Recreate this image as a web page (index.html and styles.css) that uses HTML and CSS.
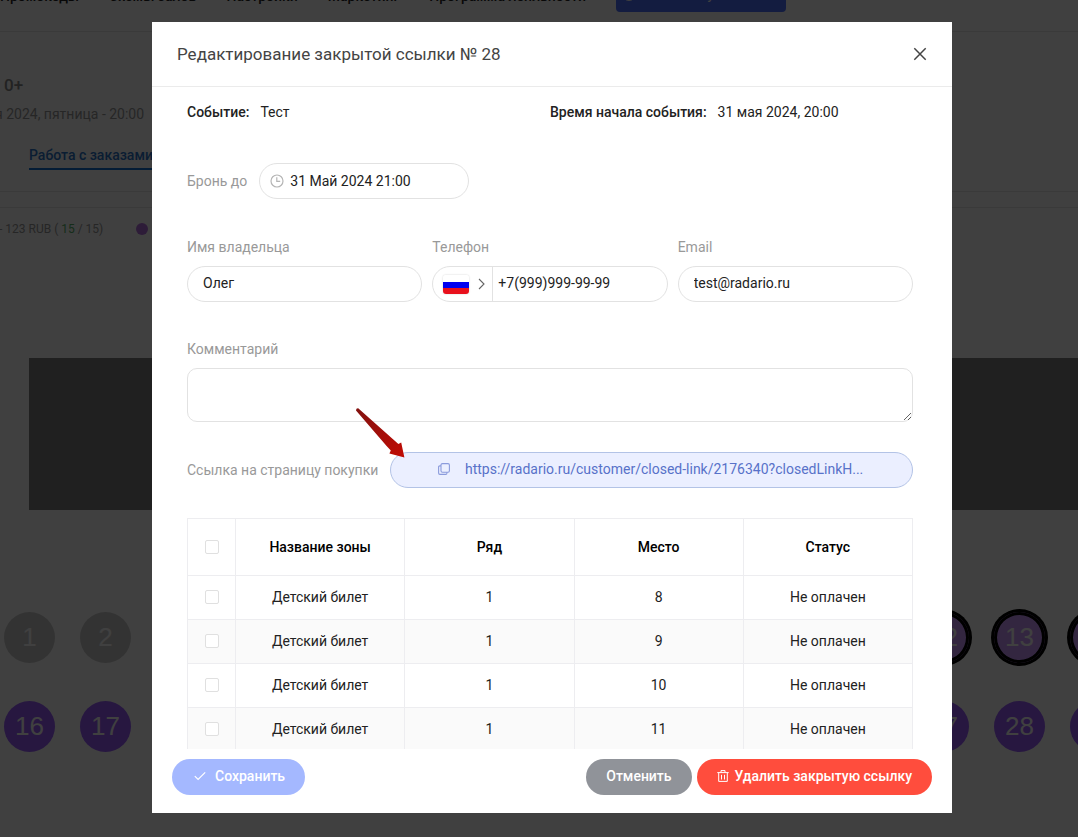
FILE: index.html
```html
<!DOCTYPE html>
<html lang="ru">
<head>
<meta charset="utf-8">
<title>Редактирование закрытой ссылки</title>
<link rel="stylesheet" href="styles.css">
</head>
<body>
<div class="page">
  <header class="topbar">
    <nav class="nav">
      <a href="#">Промокоды</a>
      <a href="#">Схемы залов</a>
      <a href="#">Настройки</a>
      <a href="#">Маркетинг</a>
      <a href="#">Программа лояльности</a>
    </nav>
    <button class="create" type="button"><span class="create-dot"></span>Заказать участие</button>
  </header>
  <section class="event">
    <h1 class="event-age">0+</h1>
    <p class="event-date">я 2024, пятница - 20:00</p>
    <nav class="tabs"><a class="tab" href="#">Работа с заказами</a></nav>
  </section>
  <div class="legend">
    <span>- 123 RUB ( <span class="legend-free">15</span> / 15)</span>
    <span class="legend-dot"></span>
  </div>
  <div class="stage"></div>
  <div class="seats">
    <div class="seat-row">
      <span class="seat seat-off">1</span>
      <span class="seat seat-off">2</span>
      <span class="seat seat-picked seat-right">12</span>
      <span class="seat seat-picked">13</span>
      <span class="seat seat-picked">14</span>
    </div>
    <div class="seat-row">
      <span class="seat">16</span>
      <span class="seat">17</span>
      <span class="seat seat-right">27</span>
      <span class="seat">28</span>
      <span class="seat">29</span>
    </div>
  </div>
</div>

<div class="overlay">
  <div class="modal" role="dialog" aria-modal="true" aria-labelledby="modal-title">
    <div class="modal-head">
      <h2 class="modal-title" id="modal-title">Редактирование закрытой ссылки № 28</h2>
      <button class="close" type="button" aria-label="Закрыть">
        <svg width="14" height="14" viewBox="0 0 14 14" fill="none" stroke="#444" stroke-width="1.5"><path d="M1.3 1.3l11.4 11.4M12.7 1.3L1.3 12.7"/></svg>
      </button>
    </div>

    <div class="modal-body">
      <div class="info">
        <div><b class="info-key">Событие:</b>Тест</div>
        <div><b class="info-key">Время начала события:</b>31 мая 2024, 20:00</div>
      </div>

      <div class="reserve">
        <label class="label" for="until">Бронь до</label>
        <div class="field field-date">
          <svg width="14" height="14" viewBox="0 0 14 14" fill="none" stroke="#b5b5b5" stroke-width="1.2"><circle cx="7" cy="7" r="6"/><path d="M6.8 3.2v4.1h3.4"/></svg>
          <input class="input" id="until" type="text" value="31 Май 2024 21:00">
        </div>
      </div>

      <div class="contacts">
        <div class="group">
          <label class="label" for="owner">Имя владельца</label>
          <div class="field field-text"><input class="input" id="owner" type="text" value="Олег"></div>
        </div>
        <div class="group">
          <label class="label" for="phone">Телефон</label>
          <div class="field field-phone">
            <button class="country" type="button" aria-label="Код страны">
              <span class="flag"></span>
              <svg width="7" height="12" viewBox="0 0 7 12" fill="none" stroke="#666" stroke-width="1.1"><path d="M1 1l5 5-5 5"/></svg>
            </button>
            <input class="input" id="phone" type="tel" value="+7(999)999-99-99">
          </div>
        </div>
        <div class="group">
          <label class="label" for="email">Email</label>
          <div class="field field-text"><input class="input" id="email" type="email" value="test@radario.ru"></div>
        </div>
      </div>

      <div class="group comment">
        <label class="label" for="comment">Комментарий</label>
        <textarea class="textarea" id="comment"></textarea>
      </div>

      <div class="link-row">
        <span class="label">Ссылка на страницу покупки</span>
        <button class="copy" type="button">
          <svg width="12" height="12" viewBox="0 0 12 12" fill="none" stroke="#8b9bdc" stroke-width="1.1"><rect x="3" y="0.6" width="8.4" height="8.6" rx="1.4"/><path d="M3 2.9H1.8q-1.2 0-1.2 1.2v6q0 1.3 1.3 1.3h5.8q1.2 0 1.2-1.2V9.2"/></svg>
          <span>https://radario.ru/customer/closed-link/2176340?closedLinkH...</span>
        </button>
        <svg class="arrow" width="52" height="54" viewBox="0 0 52 54"><defs><linearGradient id="shaft" x1="0" y1="0" x2="1" y2="1"><stop offset="0" stop-color="#82120f"/><stop offset="1" stop-color="#c20b04"/></linearGradient></defs><path fill="url(#shaft)" d="M3.2 1.2Q1 1 1 3.6L31.6 39 35.8 43.4 34.4 46.6 49.4 50.6 46.2 35.4 43.4 37 38.6 32.8Z"/></svg>
      </div>

      <table class="table">
        <thead>
          <tr><th class="check"><input type="checkbox" aria-label="Выбрать все"></th><th>Название зоны</th><th>Ряд</th><th>Место</th><th>Статус</th></tr>
        </thead>
        <tbody>
          <tr><td><input type="checkbox" aria-label="Место 8"></td><td>Детский билет</td><td>1</td><td>8</td><td>Не оплачен</td></tr>
          <tr><td><input type="checkbox" aria-label="Место 9"></td><td>Детский билет</td><td>1</td><td>9</td><td>Не оплачен</td></tr>
          <tr><td><input type="checkbox" aria-label="Место 10"></td><td>Детский билет</td><td>1</td><td>10</td><td>Не оплачен</td></tr>
          <tr><td><input type="checkbox" aria-label="Место 11"></td><td>Детский билет</td><td>1</td><td>11</td><td>Не оплачен</td></tr>
        </tbody>
      </table>
    </div>

    <div class="modal-foot">
      <button class="btn btn-save" type="button">
        <svg width="12" height="12" viewBox="0 0 12 12" fill="none" stroke="#fff" stroke-width="1.2"><path d="M.8 6.2l3.3 3.3L11.2 2.4"/></svg>
        Сохранить
      </button>
      <button class="btn btn-cancel" type="button">Отменить</button>
      <button class="btn btn-delete" type="button">
        <svg width="12" height="12" viewBox="0 0 12 12" fill="none" stroke="#fff" stroke-width="1"><path d="M.3 2.6h11.4M4 2.4V.6h4v1.8M1.7 2.8v8.6h8.6V2.8M4.5 4.8v4.7M7.5 4.8v4.7"/></svg>
        Удалить закрытую ссылку
      </button>
    </div>
  </div>
</div>
</body>
</html>
```

FILE: styles.css
```css
* { box-sizing: border-box; }

body {
  margin: 0;
  font: 14px/20px Roboto, "Open Sans", sans-serif;
  color: #222;
  background: #fff;
  overflow: hidden;
}

button, input, textarea { font: inherit; color: inherit; }
button { cursor: pointer; }
h1, h2, p { margin: 0; }
a { color: inherit; text-decoration: none; }

/* Page behind the dialog */
.page { height: 100vh; overflow: hidden; }

.topbar {
  display: flex;
  align-items: center;
  height: 72px;
  margin-top: -40px;
  border-bottom: 1px solid #e6e6e6;
}
.nav {
  display: flex;
  gap: 30px;
  font-weight: 500;
  white-space: nowrap;
}
.create {
  display: flex;
  align-items: center;
  gap: 8px;
  width: 170px;
  height: 32px;
  margin-left: 30px;
  padding: 0 6px 4px;
  border: 0;
  border-radius: 4px;
  background: #4d70ff;
  color: #fff;
}
.create-dot { width: 14px; height: 14px; border: 1px solid #fff; border-radius: 50%; }

.event { height: 160px; padding: 43px 0 0 4px; border-bottom: 1px solid #e6e6e6; }
.event-age { font-size: 17px; line-height: 20px; font-weight: 500; color: #888; }
.event-date { margin: 9px 0 0 -9px; color: #999; }
.tabs { display: flex; padding: 21px 0 0 25px; }
.tab { padding-bottom: 3px; border-bottom: 2px solid #1272d4; color: #2a73c8; font-weight: 500; }

.legend {
  display: flex;
  align-items: center;
  gap: 33px;
  height: 42px;
  margin: 15px 0 0 -1px;
  border-top: 1px solid #e6e6e6;
  font-size: 12px;
  color: #999;
}
.legend-free { color: #59b368; }
.legend-dot { width: 12px; height: 12px; border-radius: 50%; background: #b56fe0; }

.stage { height: 152px; margin: 109px 0 0 29px; background: #808080; }

.seats { display: grid; gap: 38px; padding: 102px 0 0 4px; }
.seat-row { display: flex; gap: 25px; margin-right: -43px; }
.seat {
  flex: none;
  width: 51px;
  height: 51px;
  border-radius: 50%;
  background: #9a5cff;
  color: #fff;
  font: 26px/51px "Liberation Sans", Arial, sans-serif;
  text-align: center;
}
.seat-off { background: #ccc; }
.seat-picked { background: #cc99ff; box-shadow: 0 0 0 3px #000, inset 0 0 0 3px #000; }
.seat-right { margin-left: auto; }

/* Dialog */
.overlay {
  position: fixed;
  inset: 0;
  display: flex;
  align-items: flex-start;
  justify-content: center;
  padding: 22px 24px 24px 50px;
  background: rgba(0, 0, 0, .75);
}
.modal {
  display: flex;
  flex-direction: column;
  width: 100%;
  max-width: 800px;
  max-height: 100%;
  background: #fff;
}

.modal-head {
  display: flex;
  flex: none;
  align-items: center;
  justify-content: space-between;
  padding: 20px 25px;
  border-bottom: 1px solid #ebebeb;
}
.modal-title { font-size: 17px; line-height: 24px; font-weight: 400; color: #444; }
.close { display: flex; padding: 0; border: 0; background: none; }

.modal-body {
  flex: 1;
  min-height: 0;
  padding: 15px 39px 0 35px;
  overflow: hidden;
}

.info { display: grid; grid-template-columns: 1fr 1fr; }
.info-key { margin-right: 11px; font-weight: 500; }

.label { color: #999; }
.field {
  display: flex;
  align-items: center;
  height: 36px;
  border: 1px solid #e2e2e2;
  border-radius: 18px;
  overflow: hidden;
}
.input { flex: 1; width: 100%; min-width: 0; height: 100%; padding: 0; border: 0; outline: 0; background: none; }
.field-text .input, .field-phone .input { padding-bottom: 2px; }

.reserve { display: flex; align-items: center; gap: 12px; margin-top: 41px; }
.field-date { width: 210px; padding: 0 10px; gap: 6px; }

.contacts { display: grid; grid-template-columns: repeat(3, 1fr); gap: 10px; margin-top: 38px; }
.group { display: grid; gap: 9px; }
.field-text { padding: 0 15px; }
.country {
  display: flex;
  align-items: center;
  gap: 9px;
  height: 100%;
  margin-right: 5px;
  padding: 0 7px 0 10px;
  border: 0;
  border-right: 1px solid #e2e2e2;
  background: none;
}
.flag {
  width: 26px;
  height: 19px;
  border-radius: 3px;
  background: linear-gradient(#fff 7px, #0000f0 7px 13px, #e8101c 13px);
  box-shadow: 0 0 2px rgba(0, 0, 0, .2);
}

.comment { margin-top: 37px; }
.textarea {
  display: block;
  width: 100%;
  height: 54px;
  border: 1px solid #e2e2e2;
  border-radius: 10px;
  outline: 0;
  resize: vertical;
}

.link-row { position: relative; display: flex; align-items: center; gap: 12px; margin-top: 30px; }
.copy {
  display: flex;
  flex: 1;
  align-items: center;
  justify-content: center;
  gap: 15px;
  height: 36px;
  padding: 0 12px 2px 10px;
  border: 1px solid #b3c3e6;
  border-radius: 18px;
  background: #ebefff;
  color: #5872c9;
}
.arrow { position: absolute; left: 168px; top: -45px; }

.table {
  width: 100%;
  margin-top: 30px;
  border-collapse: collapse;
  table-layout: fixed;
  text-align: center;
}
.table th, .table td { height: 44px; padding: 0; border: 1px solid #ededf0; }
.table td { padding-bottom: 2px; }
.table th { height: 57px; font-weight: 500; color: #000; }
.table .check { width: 48px; }
.table tbody tr:nth-child(even) { background: #fafafa; }
.table input {
  display: block;
  appearance: none;
  width: 14px;
  height: 14px;
  margin: 0 auto;
  border: 1px solid #e0e0e0;
  border-radius: 2px;
  background: #fff;
}

.modal-foot { display: flex; flex: none; gap: 5px; padding: 10px 20px 18px; }
.btn {
  display: flex;
  align-items: center;
  gap: 6px;
  height: 36px;
  padding: 0 20px 2px;
  border: 0;
  border-radius: 18px;
  color: #fff;
  font-weight: 500;
}
.btn-save { gap: 9px; margin-right: auto; padding: 0 20px 2px 22px; background: #a4b8ff; }
.btn-cancel { background: #909399; }
.btn-delete { background: #ff4d3d; }
```
